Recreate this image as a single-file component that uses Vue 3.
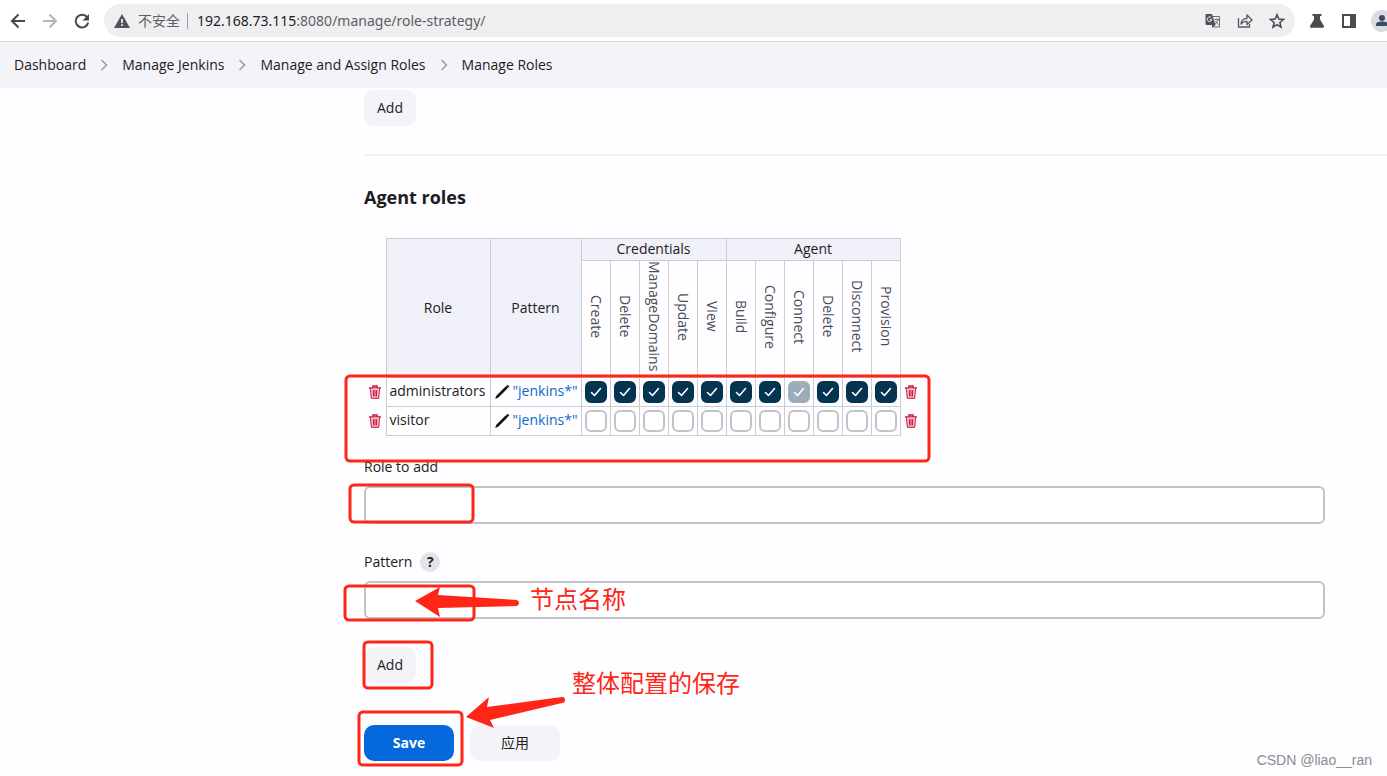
<script setup>
import { ref } from 'vue'

const crumbs = ['Dashboard', 'Manage Jenkins', 'Manage and Assign Roles', 'Manage Roles']

const groups = [
  { name: 'Credentials', permissions: ['Create', 'Delete', 'ManageDomains', 'Update', 'View'] },
  { name: 'Agent', permissions: ['Build', 'Configure', 'Connect', 'Delete', 'Disconnect', 'Provision'] },
]
const permissions = groups.flatMap((g) => g.permissions.map((name) => ({ group: g.name, name })))

const roles = ref([
  { name: 'administrators', pattern: '"jenkins*"', granted: permissions.map(() => true), locked: 7 },
  { name: 'visitor', pattern: '"jenkins*"', granted: permissions.map(() => false), locked: -1 },
])

const roleToAdd = ref('')
const pattern = ref('')
</script>

<template>
  <div class="page">
    <header class="toolbar">
      <button class="icon-btn" aria-label="Back">
        <svg width="16" height="16" viewBox="0 0 16 16" fill="none" stroke="#45484c" stroke-width="2"><path d="M15 8H2M8.500 1.500L2 8l6.500 6.500" /></svg>
      </button>
      <button class="icon-btn" aria-label="Forward">
        <svg width="16" height="16" viewBox="0 0 16 16" fill="none" stroke="#b4b5b8" stroke-width="2"><path d="M1 8h13M7.500 1.500L14 8l-6.500 6.500" /></svg>
      </button>
      <button class="icon-btn" aria-label="Reload">
        <svg width="16" height="16" viewBox="0 0 16 16"><path d="M13.200 4.500A6.300 6.300 0 1 0 14.200 9.500" fill="none" stroke="#45484c" stroke-width="2" /><path d="M15 1v6.500H8.500z" fill="#45484c" /></svg>
      </button>
      <div class="omnibox">
        <svg width="16" height="14" viewBox="0 0 16 14"><path d="M8 0l8 14H0z" fill="#505357" /><path d="M7.200 5h1.600v4H7.200zM7.200 10.300h1.600v1.600H7.200z" fill="#fff" /></svg>
        <span class="insecure">不安全</span>
        <span class="divider"></span>
        <span class="url"><b>192.168.73.115</b>:8080/manage/role-strategy/</span>
        <button class="icon-btn" aria-label="Translate">
          <svg width="16" height="16" viewBox="0 0 16 16"><path d="M6 3.500h8.500v10.500H8.500" fill="none" stroke="#6a6c70" /><path d="M1.500 1H7l3.500 11H1.500Q.5 12 .5 11V2Q.5 1 1.500 1z" fill="#505357" /><path d="M7 15l3.500-3H7z" fill="#505357" /><path d="M6.300 4.700A2.300 2.300 0 1 0 6.800 6.700H4.800" fill="none" stroke="#fff" /><path d="M9.500 6.500h4.500M11.700 5.500v1M13.200 6.500q-.8 3-3 4.500M10.500 8q1 2 3 3.500" fill="none" stroke="#6a6c70" /></svg>
        </button>
        <button class="icon-btn" aria-label="Share">
          <svg width="16" height="16" viewBox="0 0 16 16" fill="none" stroke="#55585c" stroke-width="1.300"><path d="M1.500 5v9h11v-3" /><path d="M4 11q.5-5.500 6-5.700V2l5 5-5 4.500V8.300Q6 8.300 4 11z" stroke-linejoin="round" /></svg>
        </button>
        <button class="icon-btn" aria-label="Bookmark">
          <svg width="16" height="16" viewBox="0 0 16 16" fill="none" stroke="#45484c" stroke-width="1.500"><path d="M8 1.800l1.800 4.300 4.700.4-3.600 3 1.100 4.600L8 11.700l-4 2.400 1.100-4.600-3.600-3 4.700-.4z" /></svg>
        </button>
      </div>
      <button class="icon-btn" aria-label="Labs">
        <svg width="16" height="16" viewBox="0 0 16 16" fill="#4a4c50"><path d="M3.500 1h9v2H11v3.500l4 6.500q.5 1.800-1 1.800H2Q.5 14.800 1 13l4-6.500V3H3.500z" /></svg>
      </button>
      <button class="icon-btn" aria-label="Side panel">
        <svg width="16" height="16" viewBox="0 0 16 16"><path d="M1 1h14v14H1zM3 3v10h6V3z" fill="#4a4c50" fill-rule="evenodd" /></svg>
      </button>
      <button class="icon-btn avatar" aria-label="Profile">
        <svg width="22" height="22" viewBox="0 0 22 22"><circle cx="11" cy="11" r="11" fill="#d9dce3" /><circle cx="11" cy="8" r="3" fill="#3a4a68" /><path d="M5 16v-1.500q0-3 6-3t6 3V16z" fill="#3a4a68" /></svg>
      </button>
    </header>

    <nav class="crumbs" aria-label="Breadcrumb">
      <template v-for="(crumb, i) in crumbs" :key="crumb">
        <svg v-if="i" width="8" height="12" viewBox="0 0 8 12" fill="none" stroke="#9a9aa4" stroke-width="1.500"><path d="M1.500 1l5 5-5 5" /></svg>
        <a href="#">{{ crumb }}</a>
      </template>
    </nav>

    <main>
      <button class="btn">Add</button>
      <hr />
      <h2>Agent roles</h2>

      <table>
        <colgroup>
          <col class="col-remove" />
          <col class="col-role" />
          <col class="col-pattern" />
          <col v-for="(p, i) in permissions" :key="i" class="col-check" />
          <col class="col-remove" />
        </colgroup>
        <thead>
          <tr>
            <td class="bare" rowspan="2"></td>
            <th class="head" rowspan="2">Role</th>
            <th class="head" rowspan="2">Pattern</th>
            <th v-for="g in groups" :key="g.name" class="head group" :colspan="g.permissions.length">{{ g.name }}</th>
            <td class="bare" rowspan="2"></td>
          </tr>
          <tr class="permissions">
            <th v-for="p in permissions" :key="p.group + p.name"><span>{{ p.name }}</span></th>
          </tr>
        </thead>
        <tbody>
          <tr v-for="role in roles" :key="role.name">
            <td class="bare">
              <button class="icon-btn" :aria-label="'Remove ' + role.name">
                <svg width="12" height="14" viewBox="0 0 12 14" fill="none" stroke="#c8103c"><path d="M0 3h12M4 2.500V1h4v1.500" stroke-width="1.400" /><path d="M1.500 3.500l.8 9.800h7.400l.8-9.800" fill="#f9c3cf" /><path d="M4.300 5l.3 6.500M6 5v6.500M7.700 5l-.3 6.500" /></svg>
              </button>
            </td>
            <td class="name">{{ role.name }}</td>
            <td class="pattern">
              <div class="pattern-cell">
                <button class="icon-btn" :aria-label="'Edit pattern of ' + role.name">
                  <svg width="16" height="16" viewBox="0 0 16 16" fill="none" stroke="#111" stroke-linecap="round"><path d="M3.500 13.500L12 5" stroke-width="2.600" /><path d="M13.500 3.600l.2-.2" stroke-width="2.600" /><path d="M2 15l1.500-1.500" stroke-width="1.400" /></svg>
                </button>
                <a href="#">{{ role.pattern }}</a>
              </div>
            </td>
            <td v-for="(p, i) in permissions" :key="i">
              <span class="check">
                <input v-model="role.granted[i]" type="checkbox" :disabled="role.locked === i" :aria-label="role.name + ' ' + p.group + ' ' + p.name" />
                <svg v-if="role.granted[i]" width="12" height="10" viewBox="0 0 12 10" fill="none" stroke="#fff" stroke-width="1.600" stroke-linecap="round" stroke-linejoin="round"><path d="M1.500 5.500l3 3 6-7" /></svg>
              </span>
            </td>
            <td class="bare">
              <button class="icon-btn" :aria-label="'Remove ' + role.name">
                <svg width="12" height="14" viewBox="0 0 12 14" fill="none" stroke="#c8103c"><path d="M0 3h12M4 2.500V1h4v1.500" stroke-width="1.400" /><path d="M1.500 3.500l.8 9.800h7.400l.8-9.800" fill="#f9c3cf" /><path d="M4.300 5l.3 6.500M6 5v6.500M7.700 5l-.3 6.500" /></svg>
              </button>
            </td>
          </tr>
        </tbody>
      </table>

      <div class="field">
        <div class="label-row"><label for="role">Role to add</label></div>
        <input id="role" v-model="roleToAdd" type="text" />
      </div>
      <div class="field">
        <div class="label-row">
          <label for="pattern">Pattern</label>
          <button class="help" aria-label="Help for Pattern">?</button>
        </div>
        <input id="pattern" v-model="pattern" type="text" />
      </div>
      <button class="btn">Add</button>

      <div class="actions">
        <button class="btn primary">Save</button>
        <button class="btn">应用</button>
      </div>
    </main>

    <svg class="notes" aria-label="Notes">
      <g fill="none" stroke="#ff2617" stroke-width="3">
        <rect x="346" y="376" width="583" height="85" rx="4" />
        <rect x="350" y="485" width="123" height="37" rx="4" />
        <rect x="345" y="586" width="129" height="34" rx="4" />
        <rect x="364" y="642" width="68" height="46" rx="4" />
        <rect x="359" y="712" width="103" height="53" rx="4" />
      </g>
      <g fill="#ff2617">
        <path d="M415 601l25-14-2 8 79 5q2 1 2 3t-2 3l-79 2 2 9z" />
        <path d="M466 717l23-20-2 10 75-10q3 0 3 3t-3 3l-72 17 4 8z" />
      </g>
      <text x="530" y="608">节点名称</text>
      <text x="572" y="692">整体配置的保存</text>
    </svg>
    <span class="watermark">CSDN @liao__ran</span>
  </div>
</template>

<style>
body {
  margin: 0;
}
</style>

<style scoped>
.page {
  position: relative;
  box-sizing: border-box;
  min-height: 100vh;
  overflow: hidden;
  background: #fefdff;
  color: #1c1c22;
  font: 14px/20px "Open Sans", "Noto Sans CJK SC", sans-serif;
}
button,
input {
  font: inherit;
  color: inherit;
}
.icon-btn {
  display: flex;
  flex: none;
  padding: 0;
  border: 0;
  background: none;
}
.toolbar {
  display: flex;
  align-items: center;
  gap: 16px;
  height: 41px;
  padding-left: 10px;
  border-bottom: 1px solid #d6d6da;
  background: #fff;
}
.omnibox {
  display: flex;
  flex: 1;
  align-items: center;
  height: 33px;
  margin: 0 -2px;
  padding: 0 10px;
  border-radius: 17px;
  background: #efeff1;
  color: #5c5e63;
}
.insecure {
  margin-left: 8px;
}
.divider {
  width: 1px;
  height: 16px;
  margin: 0 9px 0 7px;
  background: #9c9da1;
}
.url {
  flex: 1;
  font-family: "Noto Sans", sans-serif;
}
.url b {
  color: #1f2024;
  font-weight: 400;
}
.omnibox .icon-btn {
  margin-left: 16px;
}
.avatar {
  margin-right: -6px;
  margin-left: -2px;
}
.crumbs {
  display: flex;
  align-items: center;
  gap: 14px;
  height: 46px;
  padding-left: 14px;
  background: #f3f3f8;
}
.crumbs a {
  color: inherit;
  text-decoration: none;
}
main {
  padding: 2px 0 15px 364px;
}
.btn {
  display: block;
  height: 36px;
  padding: 0 13px;
  border: 0;
  border-radius: 10px;
  background: #f4f4f8;
}
hr {
  height: 2px;
  margin: 28px 0 29px;
  border: 0;
  background: #f2f2f6;
}
h2 {
  margin: 0;
  font-size: 18px;
  line-height: 24px;
  font-weight: 700;
}
table {
  width: 558px;
  margin-top: 29px;
  border-collapse: collapse;
  table-layout: fixed;
}
.col-remove {
  width: 22px;
}
.col-role {
  width: 104px;
}
.col-pattern {
  width: 91px;
}
.col-check {
  width: 29px;
}
th,
td {
  box-sizing: border-box;
  height: 29px;
  padding: 0;
  border: 1px solid #ccccd0;
  font-weight: 400;
}
.bare {
  border-width: 0;
}
.bare .icon-btn {
  margin: 0 auto;
}
.head {
  background: #f0f0f8;
}
.group {
  height: 22px;
  line-height: 18px;
  padding-bottom: 2px;
}
.permissions th {
  height: 117px;
  color: #4c4c54;
}
.permissions span {
  display: inline-block;
  writing-mode: vertical-rl;
}
.name,
.pattern {
  padding: 0 0 2px 3px;
}
.pattern-cell {
  display: flex;
  align-items: center;
  gap: 3px;
}
.pattern-cell a {
  color: #0b6ac7;
  text-decoration: none;
}
.check {
  display: grid;
  place-items: center;
}
.check > * {
  grid-area: 1 / 1;
}
.check svg {
  pointer-events: none;
}
.check input {
  appearance: none;
  box-sizing: border-box;
  width: 22px;
  height: 22px;
  margin: 0;
  border: 2px solid #c2c4c9;
  border-radius: 6px;
  background: #fff;
}
.check input:checked {
  border-color: #053452;
  background: #053452;
}
.check input:disabled {
  border-color: #9badba;
  background: #9badba;
}
.field {
  margin: 0 62px 28px 0;
}
table + .field {
  margin-top: 21px;
}
.label-row {
  display: flex;
  align-items: center;
  gap: 8px;
  height: 20px;
  margin-bottom: 9px;
}
.help {
  width: 20px;
  height: 20px;
  padding: 0;
  border: 0;
  border-radius: 50%;
  background: #e4e3e8;
  font-weight: 700;
  line-height: 20px;
}
.field input {
  display: block;
  box-sizing: border-box;
  width: 100%;
  height: 38px;
  padding: 0 10px;
  border: 2px solid #c0c3c7;
  border-radius: 6px;
  background: #fff;
}
.actions {
  display: flex;
  gap: 16px;
  margin-top: 42px;
}
.actions .btn {
  min-width: 90px;
}
.actions .primary {
  background: #0568dd;
  color: #fff;
  font-weight: 700;
}
.notes {
  position: absolute;
  inset: 0;
  width: 100%;
  height: 100%;
  pointer-events: none;
}
.notes text {
  fill: #ff2617;
  font-family: "Noto Sans CJK SC", sans-serif;
  font-size: 24px;
}
.watermark {
  position: absolute;
  right: 15px;
  bottom: 6px;
  color: #8b8b90;
  font-family: "Liberation Sans", sans-serif;
}
</style>
